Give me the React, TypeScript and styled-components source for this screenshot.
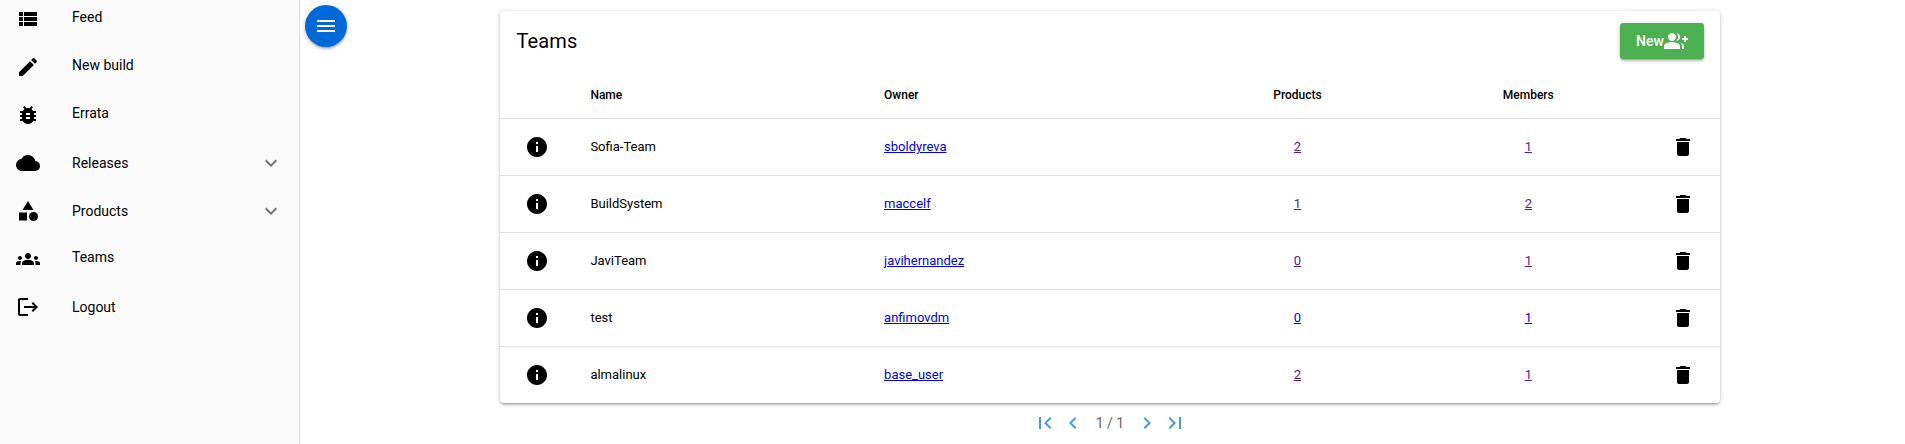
import React from 'react';
import styled, { createGlobalStyle } from 'styled-components';
import {
  MdBugReport,
  MdCategory,
  MdChevronLeft,
  MdChevronRight,
  MdCloud,
  MdDelete,
  MdEdit,
  MdFirstPage,
  MdGroupAdd,
  MdGroups,
  MdInfo,
  MdKeyboardArrowDown,
  MdLastPage,
  MdMenu,
  MdViewList,
} from 'react-icons/md';

const GlobalStyle = createGlobalStyle`
  *, *::before, *::after { box-sizing: border-box; }
  body {
    margin: 0;
    background: #fff;
    color: #000;
    font-family: Roboto, "Liberation Sans", sans-serif;
    font-size: 14px;
    overflow: hidden;
  }
  svg { display: block; flex: none; }
`;

const Layout = styled.div`
  display: flex;
  height: 444px;
`;

const Drawer = styled.nav`
  width: 300px;
  flex: none;
  padding-top: 7px;
  background: #fafafa;
  border-right: 1px solid #dcdcdc;
`;

const NavItem = styled.a`
  display: flex;
  align-items: flex-start;
  height: 48px;
  padding: 0 16px;
  color: #000;
`;

const NavLabel = styled.span<{ $centered?: boolean }>`
  flex: 1;
  margin-left: 32px;
  line-height: ${({ $centered }) => ($centered ? '24px' : '20px')};
`;

const Expand = styled.span`
  color: #757575;
`;

const Main = styled.main`
  flex: 1;
  display: flex;
  align-items: flex-start;
`;

const MenuButton = styled.button`
  display: flex;
  align-items: center;
  justify-content: center;
  width: 42px;
  height: 42px;
  margin: 5px 0 0 5px;
  padding: 0;
  border: 0;
  border-radius: 50%;
  color: #fff;
  background: #0069d9;
  box-shadow: 0 1px 5px rgba(0, 0, 0, 0.2), 0 2px 2px rgba(0, 0, 0, 0.14),
    0 3px 1px -2px rgba(0, 0, 0, 0.12);
`;

const Content = styled.div`
  width: 1220px;
  margin: 11px 0 0 153px;
`;

const Card = styled.section`
  border-radius: 4px;
  background: #fff;
  box-shadow: 0 1px 5px rgba(0, 0, 0, 0.2), 0 2px 2px rgba(0, 0, 0, 0.14),
    0 3px 1px -2px rgba(0, 0, 0, 0.12);
`;

const CardTop = styled.header`
  display: flex;
  align-items: center;
  justify-content: space-between;
  height: 60px;
  padding: 0 16px 0 16.5px;
`;

const Title = styled.h1`
  margin: 0;
  font-size: 20px;
  font-weight: 400;
  letter-spacing: 0.1px;
`;

const NewButton = styled.button`
  display: flex;
  align-items: center;
  justify-content: center;
  width: 84px;
  height: 36px;
  padding: 0;
  border: 0;
  border-radius: 3px;
  color: #fff;
  background: #4caf50;
  font: 500 14px Roboto, "Liberation Sans", sans-serif;
  box-shadow: 0 1px 5px rgba(0, 0, 0, 0.2), 0 2px 2px rgba(0, 0, 0, 0.14),
    0 3px 1px -2px rgba(0, 0, 0, 0.12);
`;

const Row = styled.div<{ $head?: boolean }>`
  display: grid;
  grid-template-columns: 74.6px 293.7px 315.5px 227.8px 233.8px 74.6px;
  align-items: center;
  height: ${({ $head }) => ($head ? '48px' : '57px')};
  padding: ${({ $head }) => ($head ? '1px 0 0' : '0')};
  font-size: ${({ $head }) => ($head ? '12px' : '13px')};
  font-weight: ${({ $head }) => ($head ? 500 : 400)};
  border-bottom: 1px solid rgba(0, 0, 0, 0.12);

  &:last-child {
    height: 56px;
    border-bottom: 0;
  }
`;

const Cell = styled.div<{ $head?: boolean }>`
  padding: 0 0 ${({ $head }) => ($head ? '0' : '1px')} 15.8px;
`;

const NumberCell = styled.div<{ $head?: boolean }>`
  padding: 0 0.4px ${({ $head }) => ($head ? '0' : '1px')} 0;
  text-align: center;
`;

const IconCell = styled.div`
  display: flex;
  justify-content: center;
`;

const Link = styled.a<{ $visited?: boolean }>`
  color: ${({ $visited }) => ($visited ? '#551a8b' : '#0000ee')};
  text-decoration: underline;
`;

const Pagination = styled.div`
  display: flex;
  justify-content: center;
  align-items: center;
  height: 40px;
`;

const PageButton = styled.span`
  display: flex;
  justify-content: center;
  width: 28px;
  color: #4c96e6;
`;

const PageCount = styled.span`
  width: 46.6px;
  text-align: center;
  font-size: 14px;
  color: #666;
`;

const LogoutIcon = ({ size }: { size: number }) => (
  <svg width={size} height={size} viewBox="0 0 24 24" fill="currentColor">
    <path d="M17 7l-1.41 1.41L18.17 11H8v2h10.17l-2.58 2.58L17 17l5-5-5-5zM4 5h8V3H4c-1.1 0-2 .9-2 2v14c0 1.1.9 2 2 2h8v-2H4V5z" />
  </svg>
);

const navItems = [
  { label: 'Feed', Icon: MdViewList },
  { label: 'New build', Icon: MdEdit },
  { label: 'Errata', Icon: MdBugReport },
  { label: 'Releases', Icon: MdCloud, centered: true, expandable: true },
  { label: 'Products', Icon: MdCategory, centered: true, expandable: true },
  { label: 'Teams', Icon: MdGroups },
  { label: 'Logout', Icon: LogoutIcon, centered: true },
];

const teams = [
  { name: 'Sofia-Team', owner: 'sboldyreva', products: 2, members: 1, visited: true },
  { name: 'BuildSystem', owner: 'maccelf', products: 1, members: 2, visited: true },
  { name: 'JaviTeam', owner: 'javihernandez', products: 0, members: 1, visited: true },
  { name: 'test', owner: 'anfimovdm', products: 0, members: 1, visited: false },
  { name: 'almalinux', owner: 'base_user', products: 2, members: 1, visited: true },
];

export default function App() {
  return (
    <Layout>
      <GlobalStyle />
      <Drawer>
        {navItems.map(({ label, Icon, centered, expandable }) => (
          <NavItem key={label}>
            <Icon size={24} />
            <NavLabel $centered={centered}>{label}</NavLabel>
            {expandable && (
              <Expand>
                <MdKeyboardArrowDown size={24} />
              </Expand>
            )}
          </NavItem>
        ))}
      </Drawer>
      <Main>
        <MenuButton aria-label="Menu">
          <MdMenu size={24} />
        </MenuButton>
        <Content>
          <Card>
            <CardTop>
              <Title>Teams</Title>
              <NewButton>
                New
                <MdGroupAdd size={24} />
              </NewButton>
            </CardTop>
            <Row $head>
              <Cell $head />
              <Cell $head>Name</Cell>
              <Cell $head>Owner</Cell>
              <NumberCell $head>Products</NumberCell>
              <NumberCell $head>Members</NumberCell>
              <Cell $head />
            </Row>
            {teams.map((team) => (
              <Row key={team.name}>
                <IconCell>
                  <MdInfo size={24} />
                </IconCell>
                <Cell>{team.name}</Cell>
                <Cell>
                  <Link>{team.owner}</Link>
                </Cell>
                <NumberCell>
                  <Link $visited={team.visited}>{team.products}</Link>
                </NumberCell>
                <NumberCell>
                  <Link $visited={team.visited}>{team.members}</Link>
                </NumberCell>
                <IconCell>
                  <MdDelete size={24} />
                </IconCell>
              </Row>
            ))}
          </Card>
          <Pagination>
            <PageButton>
              <MdFirstPage size={24} />
            </PageButton>
            <PageButton>
              <MdChevronLeft size={24} />
            </PageButton>
            <PageCount>1 / 1</PageCount>
            <PageButton>
              <MdChevronRight size={24} />
            </PageButton>
            <PageButton>
              <MdLastPage size={24} />
            </PageButton>
          </Pagination>
        </Content>
      </Main>
    </Layout>
  );
}
